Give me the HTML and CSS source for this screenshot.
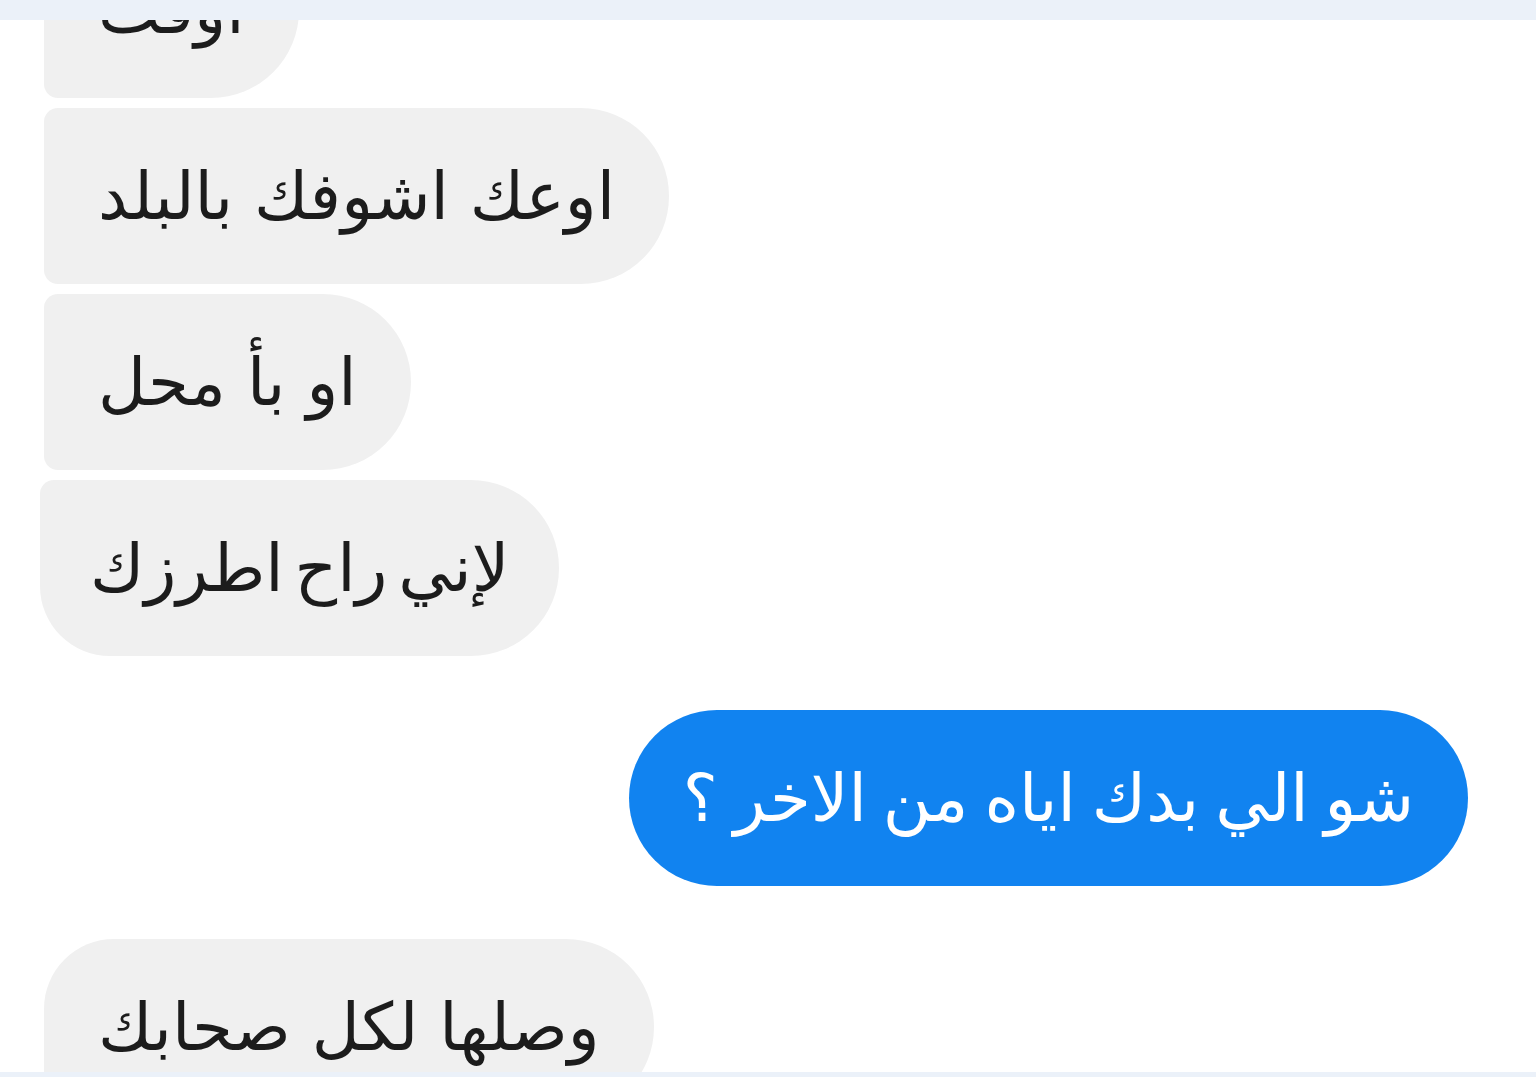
FILE: index.html
```html
<!DOCTYPE html>
<html lang="ar">
<head>
  <meta charset="UTF-8">
  <title>محادثة</title>
  <link rel="stylesheet" href="styles.css">
</head>
<body>
<div class="bar-top"></div>
<div class="chat">
  <ul class="list">
    <!--الرسائل المستلمة-->
    <li class="msg in first"><span>اوقت</span></li>
    <li class="msg in"><span>اوعك اشوفك بالبلد</span></li>
    <li class="msg in"><span>او بأ محل</span></li>
    <li class="msg in last tight"><span>لإني راح اطرزك</span></li>
    <!--الرسالة المرسلة-->
    <li class="msg out"><span>شو الي بدك اياه من الاخر ؟</span></li>
    <li class="msg in solo"><span>وصلها لكل صحابك</span></li>
  </ul>
</div>
<div class="bar-bottom"></div>
</body>
</html>
```

FILE: styles.css
```css
* {
  margin: 0;
  padding: 0;
}

ul {
  list-style: none;
}

body {
  width: 1536px;
  height: 1077px;
  overflow: hidden;
  background-color: #fff;
  font-family: "DejaVu Sans", sans-serif;
  display: flex;
  flex-direction: column;
}

.bar-top {
  height: 20px;
  background-color: #ebf1f9;
  position: relative;
  z-index: 1;
}

.bar-bottom {
  height: 5px;
  background-color: #ebf1f9;
}

.chat {
  flex: 1;
  overflow: hidden;
}

/*第一条消息被顶部栏遮住一部分*/
.list {
  margin-top: -98px;
  padding-left: 44px;
  padding-right: 68px;
  display: flex;
  flex-direction: column;
  align-items: flex-start;
}

.msg {
  height: 176px;
  padding: 0 54px;
  display: flex;
  align-items: center;
  direction: rtl;
  font-size: 66px;
  color: #1c1c1c;
  border-radius: 88px;
  margin-bottom: 10px;
}

.msg.in {
  background-color: #f0f0f0;
  border-top-left-radius: 14px;
  border-bottom-left-radius: 14px;
}

.msg.in.first {
  border-top-left-radius: 88px;
}

.msg.in.last {
  border-bottom-left-radius: 70px;
  margin-bottom: 54px;
  margin-left: -4px;
}

.msg.tight {
  word-spacing: -10px;
  padding: 0 50px;
}

.msg.in.solo {
  border-top-left-radius: 70px;
}

.msg.out {
  align-self: flex-end;
  background-color: #1183f0;
  color: #fff;
  margin-bottom: 53px;
  word-spacing: -5px;
}
```
